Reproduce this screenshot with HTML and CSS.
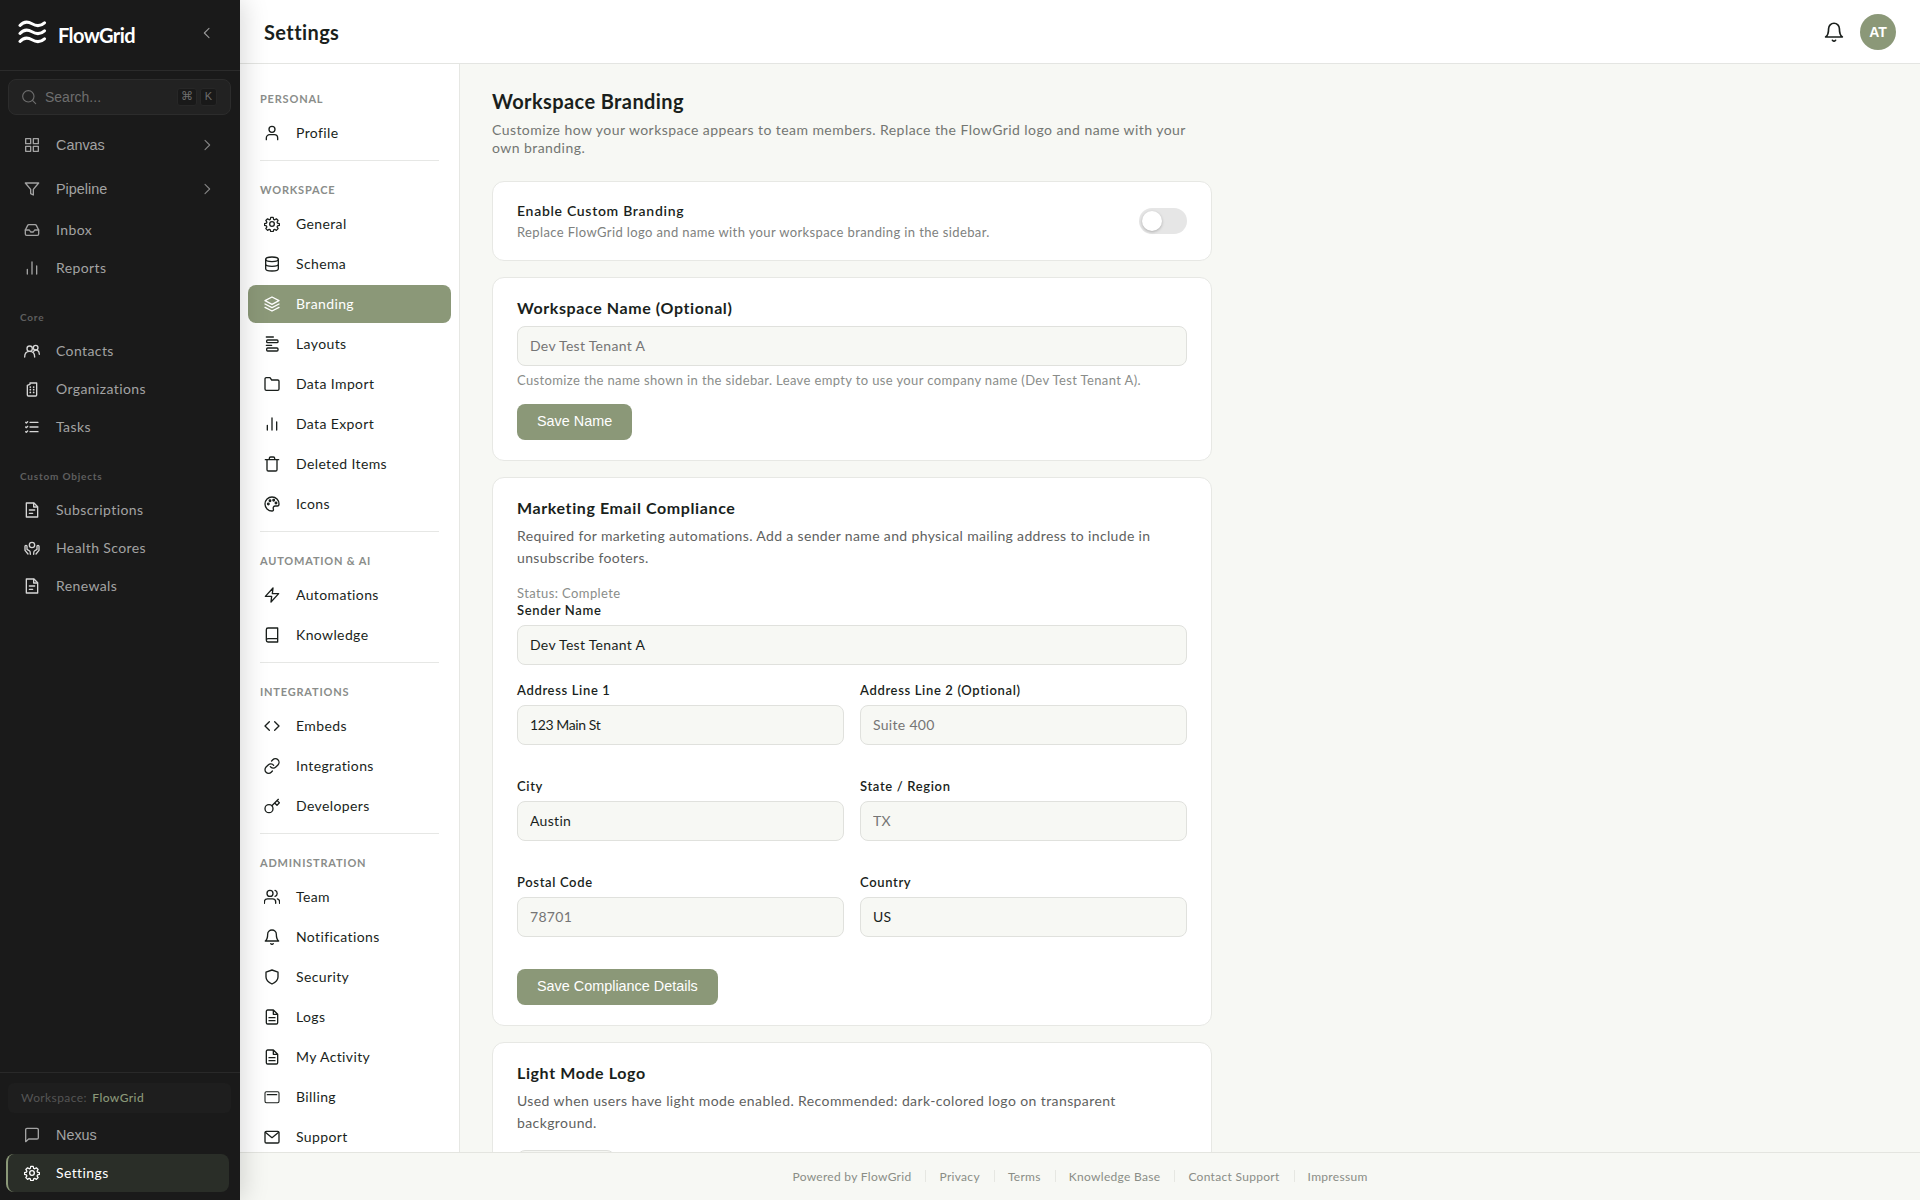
FILE: index.html
```html
<!DOCTYPE html>
<html lang="en">
<head>
  <meta charset="UTF-8">
  <title>Settings - FlowGrid</title>
  <link rel="stylesheet" href="styles.css">
</head>
<body>
  <!-- Icon sprite -->
  <svg class="sprite" aria-hidden="true">
    <symbol id="i-grid" viewBox="0 0 24 24"><rect x="2.500" y="2.500" width="7.500" height="7.500"/><rect x="14" y="2.500" width="7.500" height="7.500"/><rect x="2.500" y="14" width="7.500" height="7.500"/><rect x="14" y="14" width="7.500" height="7.500"/></symbol>
    <symbol id="i-funnel" viewBox="0 0 24 24"><path d="M22 3H2l8 9.5V19l4 2v-8.5L22 3z"/></symbol>
    <symbol id="i-inbox" viewBox="0 0 24 24"><path d="M22 12h-6l-2 3h-4l-2-3H2"/><path d="M5.5 5.1 2 12v6a2 2 0 0 0 2 2h16a2 2 0 0 0 2-2v-6l-3.500-6.900A2 2 0 0 0 16.800 4H7.200a2 2 0 0 0-1.700 1.100z"/></symbol>
    <symbol id="i-bars" viewBox="0 0 24 24"><path d="M5 21v-7M12 21V3M19 21V9"/></symbol>
    <symbol id="i-search" viewBox="0 0 24 24"><circle cx="11" cy="11" r="8.500"/><path d="m22 22-4.800-4.800"/></symbol>
    <symbol id="i-left" viewBox="0 0 24 24"><path d="m15 19-7-7 7-7"/></symbol>
    <symbol id="i-right" viewBox="0 0 24 24"><path d="m9 5 7 7-7 7"/></symbol>
    <symbol id="i-contacts" viewBox="0 0 24 24"><circle cx="8.500" cy="8.500" r="4"/><circle cx="17.500" cy="7" r="3.500"/><path d="M1 21c0-5 3-8.500 7.500-8.500S16 16 16 21M14.500 12.300c4-3.800 8.500-.8 8.500 4.700"/></symbol>
    <symbol id="i-building" viewBox="0 0 24 24"><path d="M5 21V6.500L9 5V3h10v18a1.500 1.500 0 0 1-1.500 1.500h-11A1.500 1.500 0 0 1 5 21z"/><path d="M9.500 9v.1M14.500 9v.1M9.500 13v.1M14.500 13v.1M9.500 17v.1M14.500 17v.1" stroke-width="2.600"/></symbol>
    <symbol id="i-tasks" viewBox="0 0 24 24"><path d="M9 5h12M9 12h12M9 19h12M2.500 5l1 1 2-2M2.500 12l1 1 2-2M2.500 19l1 1 2-2"/></symbol>
    <symbol id="i-doc" viewBox="0 0 24 24"><path d="M15 1.500H3.500v21h17V7z"/><path d="M14.500 2v5.500H20M8 12h8M8 17h5"/></symbol>
    <symbol id="i-health" viewBox="0 0 24 24"><circle cx="12" cy="7.500" r="4"/><path d="M1.500 9.500v6L6 21M4.500 9.500V14l4 2.500c1 .8 1 2 1 5M1.500 9.500a1.500 1.500 0 0 1 3 0M22.500 9.500v6L18 21M19.500 9.500V14l-4 2.500c-1 .8-1 2-1 5M22.500 9.500a1.500 1.500 0 0 0-3 0"/></symbol>
    <symbol id="i-chat" viewBox="0 0 24 24"><path d="M21.500 16a2 2 0 0 1-2 2H7l-4.500 4V4a2 2 0 0 1 2-2h15a2 2 0 0 1 2 2z"/></symbol>
    <symbol id="i-gear" viewBox="0 0 24 24"><circle cx="12" cy="12" r="3.500"/><path d="M10 1.500h4l.7 3.100 1.700.7 2.700-1.700 2.800 2.800-1.700 2.700.7 1.700 3.100.7v2.900l-3.100.7-.7 1.700 1.700 2.700-2.800 2.800-2.700-1.700-1.700.7-.7 3.100h-4l-.7-3.100-1.700-.7-2.700 1.700-2.800-2.800 1.700-2.700-.7-1.700L0 14.400v-2.900l3.100-.7.7-1.700-1.700-2.700 2.800-2.800 2.700 1.700 1.700-.7z" transform="translate(.8 .8) scale(.93)"/></symbol>
    <symbol id="i-user" viewBox="0 0 24 24"><circle cx="12" cy="6.500" r="4.500"/><path d="M3.500 22v-2.500a5 5 0 0 1 5-5h7a5 5 0 0 1 5 5V22"/></symbol>
    <symbol id="i-db" viewBox="0 0 24 24"><ellipse cx="12" cy="5" rx="9.500" ry="3.500"/><path d="M2.500 5v14c0 2 4.200 3.500 9.500 3.500s9.500-1.500 9.500-3.500V5M2.500 12c0 2 4.200 3.500 9.500 3.500s9.500-1.500 9.500-3.500"/></symbol>
    <symbol id="i-layers" viewBox="0 0 24 24"><path d="M12 1.500 1.500 7 12 12.500 22.500 7zM1.500 12 12 17.500 22.500 12M1.500 17 12 22.500 22.500 17"/></symbol>
    <symbol id="i-layouts" viewBox="0 0 24 24"><path d="M3.500 1.500H14M3.500 14h8"/><rect x="4" y="6" width="17" height="4" rx="1.500"/><rect x="4" y="18" width="17" height="4.500" rx="1.500"/></symbol>
    <symbol id="i-folder" viewBox="0 0 24 24"><path d="M22.500 19.500a2 2 0 0 1-2 2h-17a2 2 0 0 1-2-2v-15a2 2 0 0 1 2-2H9L11.500 6h9a2 2 0 0 1 2 2z"/></symbol>
    <symbol id="i-trash" viewBox="0 0 24 24"><path d="M2 5.500h20M19.500 5.500v15a2 2 0 0 1-2 2h-11a2 2 0 0 1-2-2v-15M8 5.500v-2a2 2 0 0 1 2-2h4a2 2 0 0 1 2 2v2"/></symbol>
    <symbol id="i-palette" viewBox="0 0 24 24"><path d="M12 1.500a10.500 10.500 0 0 0 0 21c2 0 2.500-1.300 2-3-.7-2.500.5-4.500 3-4.500h3c1.600 0 2.500-1 2.500-3C22.500 6 18 1.500 12 1.500z"/><circle cx="6.500" cy="12" r="1.200"/><circle cx="9" cy="7" r="1.200"/><circle cx="14.500" cy="6.500" r="1.200"/><circle cx="18" cy="10.500" r="1.200"/></symbol>
    <symbol id="i-bolt" viewBox="0 0 24 24"><path d="M13.500 1.500 2 14h9.500l-1 8.500L22 10h-9.500z"/></symbol>
    <symbol id="i-book" viewBox="0 0 24 24"><path d="M3.500 20V4A2.500 2.500 0 0 1 6 1.500h14.500v21H6a2.500 2.500 0 0 1 0-5h14.500"/></symbol>
    <symbol id="i-code" viewBox="0 0 24 24"><path d="m16 18.500 6.500-6.500L16 5.500M8 5.500 1.500 12 8 18.500"/></symbol>
    <symbol id="i-link" viewBox="0 0 24 24"><path d="M9.500 13a5.500 5.500 0 0 0 8.200.6l3.200-3.200a5.400 5.400 0 0 0-7.700-7.700l-1.800 1.800M14.500 11a5.500 5.500 0 0 0-8.200-.6l-3.200 3.200a5.400 5.400 0 0 0 7.700 7.700l1.800-1.800"/></symbol>
    <symbol id="i-key" viewBox="0 0 24 24"><circle cx="7.500" cy="16" r="6"/><path d="m11.800 11.700 9.700-9.700M16 7.500l3.500 3.500 3.500-3.800-3.300-3.300"/></symbol>
    <symbol id="i-team" viewBox="0 0 24 24"><path d="M17.500 21.500v-2.200a4.600 4.600 0 0 0-4.600-4.600H5.200a4.600 4.600 0 0 0-4.600 4.600v2.200M23.400 21.500v-2.200a4.600 4.600 0 0 0-3.400-4.400M16.500 2.200a4.600 4.600 0 0 1 0 8.800"/><circle cx="9" cy="6.600" r="4.500"/></symbol>
    <symbol id="i-bell" viewBox="0 0 24 24"><path d="M18.500 8a6.500 6.500 0 0 0-13 0c0 7.500-3.500 10-3.500 10h20s-3.500-2.500-3.500-10M13.800 22a2.100 2.100 0 0 1-3.600 0"/></symbol>
    <symbol id="i-shield" viewBox="0 0 24 24"><path d="M12 22.500s9-4.300 9-10.500V4.700L12 1.500 3 4.700V12c0 6.200 9 10.500 9 10.500z"/></symbol>
    <symbol id="i-file" viewBox="0 0 24 24"><path d="M14 1.500H5.500a2 2 0 0 0-2 2v17a2 2 0 0 0 2 2h13a2 2 0 0 0 2-2V8zM14 1.500V8h6.500M16.500 13h-9M16.500 17.500h-9"/></symbol>
    <symbol id="i-card" viewBox="0 0 24 24"><rect x="1.500" y="4" width="21" height="16.500" rx="2" stroke-width="1.600"/><path d="M5 8.500h14"/></symbol>
    <symbol id="i-mail" viewBox="0 0 24 24"><rect x="1.500" y="3.500" width="21" height="17.500" rx="2"/><path d="m2 5 10 8L22 5"/></symbol>
  </svg>

  <aside class="sidebar">
    <div class="brand">
      <svg class="logo" viewBox="0 0 30 26"><path d="M3 6.500C7 2 11 2.500 15 4.800S23 8 27.500 3.800M3 14.500C7 10 11 10.500 15 12.800S23 16 27.500 11.800M3 22.500C7 18 11 18.500 15 20.800S23 24 27.500 19.800"/></svg>
      <span class="brand-name">FlowGrid</span>
      <svg class="icon collapse"><use href="#i-left"/></svg>
    </div>
    <div class="search">
      <svg class="icon"><use href="#i-search"/></svg>
      <span class="search-text">Search...</span>
      <kbd>⌘</kbd><kbd>K</kbd>
    </div>
    <nav class="main-nav">
      <button class="side-item tall"><svg class="icon"><use href="#i-grid"/></svg><span>Canvas</span><svg class="icon chev"><use href="#i-right"/></svg></button>
      <button class="side-item tall"><svg class="icon"><use href="#i-funnel"/></svg><span>Pipeline</span><svg class="icon chev"><use href="#i-right"/></svg></button>
      <a class="side-item"><svg class="icon"><use href="#i-inbox"/></svg><span>Inbox</span></a>
      <a class="side-item"><svg class="icon"><use href="#i-bars"/></svg><span>Reports</span></a>
      <div class="side-label">Core</div>
      <a class="side-item object"><svg class="icon"><use href="#i-contacts"/></svg><span>Contacts</span></a>
      <a class="side-item object"><svg class="icon"><use href="#i-building"/></svg><span>Organizations</span></a>
      <a class="side-item object"><svg class="icon"><use href="#i-tasks"/></svg><span>Tasks</span></a>
      <div class="side-label">Custom Objects</div>
      <a class="side-item object"><svg class="icon"><use href="#i-doc"/></svg><span>Subscriptions</span></a>
      <a class="side-item object"><svg class="icon"><use href="#i-health"/></svg><span>Health Scores</span></a>
      <a class="side-item object"><svg class="icon"><use href="#i-doc"/></svg><span>Renewals</span></a>
    </nav>
    <div class="side-bottom">
      <div class="workspace">Workspace: <b>FlowGrid</b></div>
      <button class="side-item"><svg class="icon"><use href="#i-chat"/></svg><span>Nexus</span></button>
      <a class="side-item active"><svg class="icon"><use href="#i-gear"/></svg><span>Settings</span></a>
    </div>
  </aside>

  <div class="page">
    <header class="topbar">
      <h1>Settings</h1>
      <svg class="icon bell"><use href="#i-bell"/></svg>
      <div class="avatar">AT</div>
    </header>

    <div class="body">
      <nav class="settings-nav">
        <section>
          <h4>PERSONAL</h4>
          <a><svg class="icon"><use href="#i-user"/></svg>Profile</a>
        </section>
        <section>
          <h4>WORKSPACE</h4>
          <a><svg class="icon"><use href="#i-gear"/></svg>General</a>
          <a><svg class="icon"><use href="#i-db"/></svg>Schema</a>
          <a class="active"><svg class="icon"><use href="#i-layers"/></svg>Branding</a>
          <a><svg class="icon"><use href="#i-layouts"/></svg>Layouts</a>
          <a><svg class="icon"><use href="#i-folder"/></svg>Data Import</a>
          <a><svg class="icon"><use href="#i-bars"/></svg>Data Export</a>
          <a><svg class="icon"><use href="#i-trash"/></svg>Deleted Items</a>
          <a><svg class="icon"><use href="#i-palette"/></svg>Icons</a>
        </section>
        <section>
          <h4>AUTOMATION &amp; AI</h4>
          <a><svg class="icon"><use href="#i-bolt"/></svg>Automations</a>
          <a><svg class="icon"><use href="#i-book"/></svg>Knowledge</a>
        </section>
        <section>
          <h4>INTEGRATIONS</h4>
          <a><svg class="icon"><use href="#i-code"/></svg>Embeds</a>
          <a><svg class="icon"><use href="#i-link"/></svg>Integrations</a>
          <a><svg class="icon"><use href="#i-key"/></svg>Developers</a>
        </section>
        <section>
          <h4>ADMINISTRATION</h4>
          <a><svg class="icon"><use href="#i-team"/></svg>Team</a>
          <a><svg class="icon"><use href="#i-bell"/></svg>Notifications</a>
          <a><svg class="icon"><use href="#i-shield"/></svg>Security</a>
          <a><svg class="icon"><use href="#i-file"/></svg>Logs</a>
          <a><svg class="icon"><use href="#i-file"/></svg>My Activity</a>
          <a><svg class="icon"><use href="#i-card"/></svg>Billing</a>
          <a><svg class="icon"><use href="#i-mail"/></svg>Support</a>
        </section>
      </nav>

      <main class="content">
        <h2>Workspace Branding</h2>
        <p class="intro">Customize how your workspace appears to team members. Replace the FlowGrid logo and name with your<br>own branding.</p>

        <div class="card toggle-card">
          <div>
            <div class="toggle-title">Enable Custom Branding</div>
            <div class="toggle-sub">Replace FlowGrid logo and name with your workspace branding in the sidebar.</div>
          </div>
          <div class="switch"></div>
        </div>

        <div class="card">
          <h3>Workspace Name (Optional)</h3>
          <input class="name-input" type="text" placeholder="Dev Test Tenant A">
          <p class="help">Customize the name shown in the sidebar. Leave empty to use your company name (Dev Test Tenant A).</p>
          <button class="btn">Save Name</button>
        </div>

        <div class="card">
          <h3>Marketing Email Compliance</h3>
          <p class="desc">Required for marketing automations. Add a sender name and physical mailing address to include in<br>unsubscribe footers.</p>
          <div class="status">Status: Complete</div>
          <label for="sender">Sender Name</label>
          <input type="text" id="sender" value="Dev Test Tenant A">
          <div class="fields">
            <div><label for="line1">Address Line 1</label><input class="tight" type="text" id="line1" value="123 Main St"></div>
            <div><label for="line2">Address Line 2 (Optional)</label><input type="text" id="line2" placeholder="Suite 400"></div>
            <div><label for="city">City</label><input type="text" id="city" value="Austin"></div>
            <div><label for="state">State / Region</label><input type="text" id="state" placeholder="TX"></div>
            <div><label for="postal">Postal Code</label><input type="text" id="postal" placeholder="78701"></div>
            <div><label for="country">Country</label><input type="text" id="country" value="US"></div>
          </div>
          <button class="btn">Save Compliance Details</button>
        </div>

        <div class="card">
          <h3>Light Mode Logo</h3>
          <p class="desc desc-logo">Used when users have light mode enabled. Recommended: dark-colored logo on transparent<br>background.</p>
          <div class="logo-preview"></div>
        </div>
      </main>
    </div>

    <footer class="footer">
      <span>Powered by FlowGrid</span>
      <a>Privacy</a>
      <a>Terms</a>
      <a>Knowledge Base</a>
      <a>Contact Support</a>
      <a>Impressum</a>
    </footer>
  </div>
</body>
</html>
```

FILE: styles.css
```css
* {
  box-sizing: border-box;
}
body {
  margin: 0;
  height: 1200px;
  display: flex;
  overflow: hidden;
  background: #f7f8f4;
  color: #1a1f1c;
  font-family: Lato, "Open Sans", sans-serif;
  font-size: 14px;
  letter-spacing: 0.4px;
}
h1, h2, h3, h4, p {
  margin: 0;
}
.sprite {
  position: absolute;
  width: 0;
  height: 0;
}
.icon {
  width: 16px;
  height: 16px;
  flex: none;
  fill: none;
  stroke: currentColor;
  stroke-width: 2;
  stroke-linecap: round;
  stroke-linejoin: round;
}

/* dark sidebar */
.sidebar {
  width: 240px;
  flex: none;
  display: flex;
  flex-direction: column;
  background: #1a1a1a;
  color: #a3a3a3;
  box-shadow: 4px 0 24px rgba(0, 0, 0, 0.15);
  z-index: 2;
}
.brand {
  height: 71px;
  padding: 0 25px 5px 17px;
  display: flex;
  align-items: center;
  border-bottom: 1px solid #2b2b2b;
}
.logo {
  width: 30px;
  height: 26px;
  margin-bottom: 2px;
  fill: none;
  stroke: #fff;
  stroke-width: 3;
  stroke-linecap: round;
}
.brand-name {
  margin: 5px auto 0 11px;
  font-size: 20px;
  font-weight: 700;
  line-height: 24px;
  letter-spacing: -0.6px;
  color: #fff;
}
.search {
  height: 36px;
  margin: 8px 9px 0 8px;
  padding: 0 13px 0 12px;
  display: flex;
  align-items: center;
  border: 1px solid #2c2c2c;
  border-radius: 8px;
  background: #222;
  color: #6e6e6e;
}
.search .icon {
  stroke-width: 1.7;
}
.search-text {
  margin: 0 auto 0 8px;
  font: 14px "Liberation Sans", sans-serif;
  letter-spacing: 0;
}
kbd {
  width: 17px;
  height: 18px;
  margin-left: 3px;
  border: 1px solid #272727;
  border-radius: 3px;
  background: #191919;
  font: 11px/15px "Liberation Sans", "DejaVu Sans", sans-serif;
  letter-spacing: 0;
  text-align: center;
}
kbd:first-of-type {
  width: 20px;
  font-size: 12px;
}
.main-nav {
  flex: 1;
  padding-top: 8px;
}
.side-item {
  width: 223px;
  height: 38px;
  margin-left: 6px;
  padding: 0 14px 0 16px;
  display: flex;
  align-items: center;
  gap: 16px;
  border: 0;
  border-left: 2px solid transparent;
  border-radius: 8px;
  background: none;
  color: #a3a3a3;
  line-height: 18px;
}
button.side-item {
  font: 14.400px/18px "Liberation Sans", sans-serif;
  letter-spacing: 0;
}
.side-item.tall {
  height: 44px;
}
.side-item.object .icon {
  color: #d6d6d6;
}
.side-item .chev {
  margin-left: auto;
  stroke-width: 1.6;
  color: #858585;
}
.collapse {
  stroke-width: 1.6;
  color: #999;
}
.side-label {
  padding: 24px 20px 9px;
  font-size: 10px;
  font-weight: 700;
  line-height: 12px;
  letter-spacing: 0.8px;
  color: #5f5f5f;
}
.side-bottom {
  height: 128px;
  padding-top: 10px;
  border-top: 1px solid #292929;
}
.workspace {
  height: 30px;
  margin: 0 9px 3px 8px;
  padding-left: 13px;
  border-radius: 6px;
  background: #1e1e1e;
  color: #555;
  font-size: 12px;
  line-height: 30px;
  letter-spacing: 0.4px;
}
.workspace b {
  margin-left: 2px;
  font-weight: 500;
  color: #8b9878;
}
.side-item.active {
  border-left-color: #8b9878;
  background: #2a2e28;
  color: #fff;
}

/* right side */
.page {
  flex: 1;
  display: flex;
  flex-direction: column;
}
.topbar {
  height: 64px;
  padding: 0 24px;
  display: flex;
  align-items: center;
  background: #fff;
  border-bottom: 1px solid #e4e5e2;
}
.topbar h1 {
  margin: 0 auto 0 0;
  font-size: 20px;
  font-weight: 700;
  line-height: 24px;
  letter-spacing: 0.4px;
}
.bell {
  width: 20px;
  height: 20px;
  margin-right: 16px;
}
.avatar {
  width: 36px;
  height: 36px;
  border-radius: 50%;
  background: #8b9878;
  color: #fff;
  font: bold 14px/36px "Liberation Sans", sans-serif;
  letter-spacing: 0;
  text-align: center;
}
.body {
  height: 1088px;
  display: flex;
  overflow: hidden;
}
.settings-nav {
  width: 220px;
  flex: none;
  padding: 5px 8px 0;
  background: #fff;
  border-right: 1px solid #e6e7e3;
}
.settings-nav h4 {
  padding: 23px 12px 8px;
  font-size: 11px;
  font-weight: 700;
  line-height: 14px;
  letter-spacing: 0.8px;
  color: #8a8d8a;
}
.settings-nav section::after {
  content: "";
  display: block;
  height: 1px;
  margin: 8px 12px -1px;
  background: #e6e7e5;
}
.settings-nav a {
  height: 38px;
  padding-left: 16px;
  display: flex;
  align-items: center;
  gap: 16px;
  border-radius: 8px;
  line-height: 16px;
  letter-spacing: 0.38px;
}
.settings-nav a + a {
  margin-top: 2px;
}
.settings-nav a.active {
  background: #8b9878;
  color: #fff;
}

.content {
  width: 784px;
  padding: 24px 32px;
}
.content h2 {
  font-size: 20px;
  font-weight: 700;
  line-height: 26px;
  letter-spacing: 0.4px;
}
.intro {
  margin: 7px 0 24px;
  line-height: 18px;
  letter-spacing: 0.44px;
  white-space: nowrap;
  color: #737672;
}
.card {
  margin-bottom: 16px;
  padding: 20px 24px;
  background: #fff;
  border: 1px solid #e7e8e4;
  border-radius: 12px;
}
.toggle-card {
  height: 80px;
  display: flex;
  align-items: center;
  justify-content: space-between;
}
.toggle-title {
  margin-top: -1px;
  font-size: 14px;
  font-weight: 600;
  line-height: 20px;
  letter-spacing: 0.7px;
}
.toggle-sub {
  margin-top: 3px;
  font-size: 13px;
  line-height: 16px;
  letter-spacing: 0.38px;
  color: #7e817e;
}
.switch {
  width: 48px;
  height: 26px;
  padding: 3px;
  border-radius: 13px;
  background: #e6e6e6;
}
.switch::before {
  content: "";
  display: block;
  width: 20px;
  height: 20px;
  border-radius: 50%;
  background: #fff;
  box-shadow: 0 1px 3px rgba(0, 0, 0, 0.25);
}
.card h3 {
  font-size: 16px;
  font-weight: 700;
  line-height: 20px;
  letter-spacing: 0.6px;
}
input {
  width: 100%;
  height: 40px;
  display: block;
  padding: 0 12px 2px;
  border: 1px solid #e0e1dd;
  border-radius: 8px;
  background: #f7f8f4;
  color: #1a1f1c;
  font: 14px Lato, sans-serif;
  letter-spacing: 0.3px;
}
input::placeholder {
  color: #757575;
}
.tight {
  letter-spacing: -0.4px;
}
.name-input {
  margin-top: 8px;
}
.help {
  margin: 6px 0 16px;
  font-size: 13px;
  line-height: 16px;
  letter-spacing: 0.37px;
  white-space: nowrap;
  color: #8a8d8a;
}
.btn {
  height: 36px;
  display: block;
  padding: 0 20px 2px;
  border: 0;
  border-radius: 8px;
  background: #8b9878;
  color: #fff;
  font: 14.400px "Liberation Sans", sans-serif;
  letter-spacing: 0;
}
.desc {
  margin: 7px 0 16px;
  line-height: 22px;
  letter-spacing: 0.35px;
  white-space: nowrap;
  color: #5f625f;
}
.desc-logo {
  letter-spacing: 0.4px;
}
.status {
  font-size: 13px;
  line-height: 16px;
  color: #8a8d8a;
}
label {
  display: block;
  margin-bottom: 6px;
  font-size: 13px;
  font-weight: 600;
  line-height: 18px;
  letter-spacing: 0.65px;
}
.fields {
  margin: 16px 0 32px;
  display: grid;
  grid-template-columns: 1fr 1fr;
  gap: 32px 16px;
}
.logo-preview {
  width: 98px;
  height: 60px;
  border: 1px solid #dfe0dc;
  border-radius: 8px;
  background: #f5f6f2;
}

.footer {
  height: 48px;
  padding-bottom: 1px;
  display: flex;
  align-items: center;
  justify-content: center;
  border-top: 1px solid #e4e5e0;
  background: #f7f8f4;
  color: #8a8d86;
  font-size: 12px;
  letter-spacing: 0.3px;
}
.footer a {
  display: flex;
  align-items: center;
}
.footer a::before {
  content: "";
  width: 1px;
  height: 12px;
  margin: 0 13px 0 14px;
  background: #e6e7e2;
}
```
